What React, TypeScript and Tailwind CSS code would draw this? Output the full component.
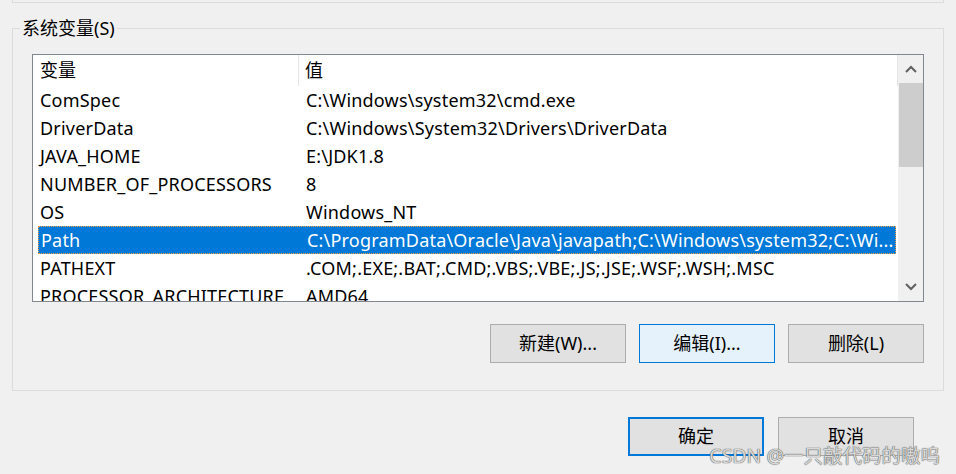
const rows: [string, string][] = [
  ['ComSpec', 'C:\\Windows\\system32\\cmd.exe'],
  ['DriverData', 'C:\\Windows\\System32\\Drivers\\DriverData'],
  ['JAVA_HOME', 'E:\\JDK1.8'],
  ['NUMBER_OF_PROCESSORS', '8'],
  ['OS', 'Windows_NT'],
  ['Path', 'C:\\ProgramData\\Oracle\\Java\\javapath;C:\\Windows\\system32;C:\\Wi...'],
  ['PATHEXT', '.COM;.EXE;.BAT;.CMD;.VBS;.VBE;.JS;.JSE;.WSF;.WSH;.MSC'],
  ['PROCESSOR_ARCHITECTURE', 'AMD64'],
]

const font = { fontFamily: '"Noto Sans", "Noto Sans CJK SC", sans-serif' }

function Chevron({ up }: { up?: boolean }) {
  return (
    <svg width="12" height="8" viewBox="0 0 12 8">
      <path d={up ? 'M1 7 L6 2 L11 7' : 'M1 1 L6 6 L11 1'} fill="none" stroke="#606060" strokeWidth="2" />
    </svg>
  )
}

function Btn({ label, primary, hot }: { label: string; primary?: boolean; hot?: boolean }) {
  const cls = primary
    ? 'border-2 border-[#0078d7] bg-[#e1e1e1]'
    : hot
      ? 'border border-[#0078d7] bg-[#e5f1fb]'
      : 'border border-[#adadad] bg-[#e1e1e1]'
  return (
    <button className={`flex h-[39px] w-[136px] items-center justify-center text-[18px] text-black ${cls}`}>
      {label}
    </button>
  )
}

export default function App() {
  return (
    <div className="relative h-[474px] w-[956px] overflow-hidden bg-[#f0f0f0] text-black" style={font}>
      <div className="mx-[12px] h-[3px] border-x border-b border-[#dcdcdc]" />

      <fieldset className="mx-[12px] mt-[14px] h-[374px] border border-[#dcdcdc] px-[19px]">
        <legend className="-ml-[12px] px-[2px] text-[18px] leading-[22px]">系统变量(S)</legend>

        <div className="mt-[15px] flex h-[248px] border border-[#828790] bg-white">
          <div className="flex-1 overflow-hidden">
            <div className="flex h-[31px] items-center text-[18px]">
              <div className="flex h-full w-[266px] items-center border-r border-[#e5e5e5] pl-[7px]">变量</div>
              <div className="flex h-full flex-1 items-center border-r border-[#e5e5e5] pl-[6px]">值</div>
            </div>
            {rows.map(([k, v]) => {
              const sel = k === 'Path'
              return (
                <div
                  key={k}
                  className={`ml-[5px] mr-[2px] flex h-[28px] items-center whitespace-nowrap text-[18px] tracking-[0.2px] ${
                    sel ? 'border border-dotted border-[#f0a040] bg-[#0078d7] text-white' : ''
                  }`}
                >
                  <div className="w-[262px] overflow-hidden pl-[2px]">{k}</div>
                  <div className="flex-1 overflow-hidden pl-[6px]">{v}</div>
                </div>
              )
            })}
          </div>
          <div className="flex w-[25px] flex-col items-center bg-[#f0f0f0]">
            <div className="flex h-[28px] items-center justify-center">
              <Chevron up />
            </div>
            <div className="h-[84px] w-[24px] bg-[#cdcdcd]" />
            <div className="flex-1" />
            <div className="flex h-[28px] items-center justify-center">
              <Chevron />
            </div>
          </div>
        </div>

        <div className="mt-[22px] flex justify-end gap-[13px]">
          <Btn label="新建(W)..." />
          <Btn label="编辑(I)..." hot />
          <Btn label="删除(L)" />
        </div>
      </fieldset>

      <div className="mt-[26px] flex justify-end gap-[14px] pr-[42px]">
        <Btn label="确定" primary />
        <Btn label="取消" />
      </div>

      <div
        className="absolute right-[16px] top-[441px] whitespace-nowrap text-[19.5px] text-[#d8d8d8]"
        style={{ textShadow: '0 0 1px #555, 0 0 1px #555' }}
      >
        CSDN @一只敲代码的嗷呜
      </div>
    </div>
  )
}
